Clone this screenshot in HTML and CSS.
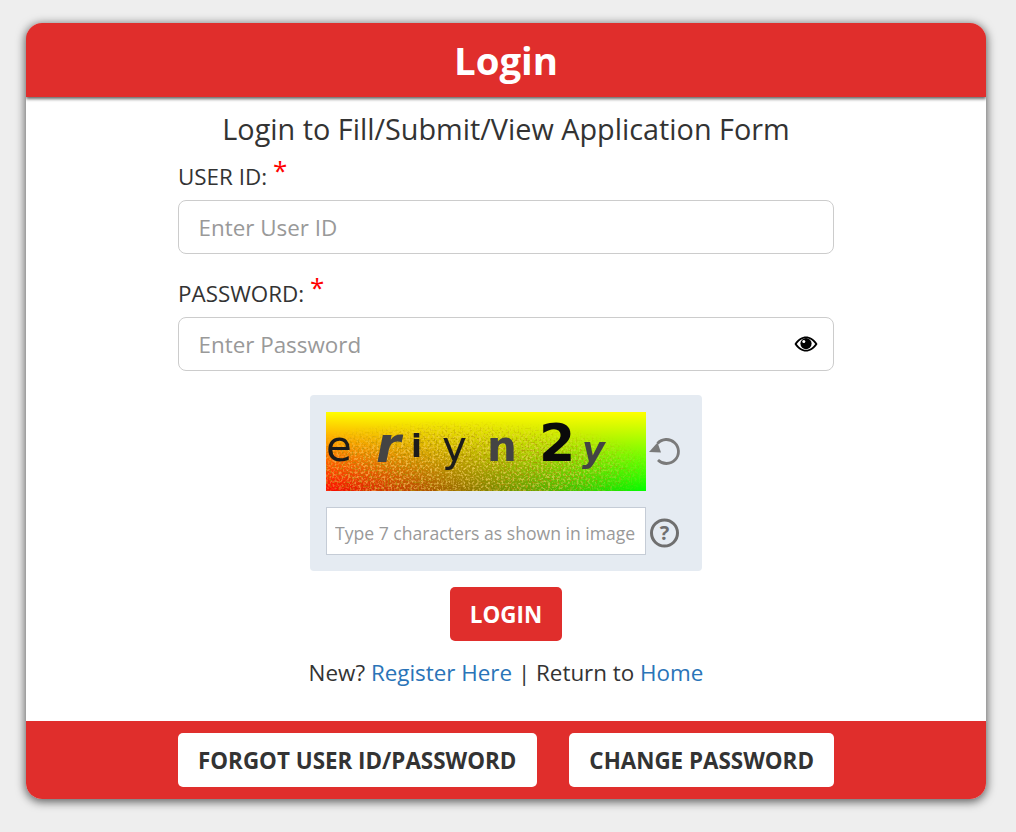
FILE: index.html
```html
<!DOCTYPE html>
<html lang="en">
<head>
<meta charset="utf-8">
<title>Login</title>
<link rel="stylesheet" href="styles.css">
</head>
<body>
<main class="card">
  <header class="card-head"><h1>Login</h1></header>
  <section class="card-body">
    <h2 class="subtitle">Login to Fill/Submit/View Application Form</h2>
    <form class="form">
      <div class="field">
        <label class="label">USER ID: <span class="req">*</span></label>
        <input class="input" type="text" placeholder="Enter User ID">
      </div>
      <div class="field">
        <label class="label">PASSWORD: <span class="req">*</span></label>
        <div class="pw-wrap">
          <input class="input" type="password" placeholder="Enter Password">
          <svg class="eye" viewBox="0 0 24 16" width="24" height="16" aria-hidden="true">
            <path fill="#000" fill-rule="evenodd" d="M.5 8C4 2.500 8 .5 12 .5S20 2.500 23.500 8C20 13.500 16 15.500 12 15.500S4 13.500 .5 8zM2.800 8C6 12.400 9 13.800 12 13.800S18 12.400 21.200 8C18 3.600 15 2.200 12 2.200S6 3.600 2.800 8z"/>
            <circle cx="12" cy="7.600" r="5.600" fill="#000"/>
            <circle cx="9.800" cy="5.600" r="1.500" fill="#fff"/>
          </svg>
        </div>
      </div>
      <div class="captcha">
        <div class="captcha-row">
          <div class="captcha-img">
            <svg class="captcha-bg" width="320" height="80" aria-hidden="true">
              <defs>
                <linearGradient id="h"><stop offset="0" stop-color="#f00"/><stop offset="1" stop-color="#0f0"/></linearGradient>
                <linearGradient id="v" x2="0" y2="1"><stop offset="0" stop-color="#ff0"/><stop offset="1" stop-color="#ff0" stop-opacity="0"/></linearGradient>
                <filter id="n" x="0" y="0" width="100%" height="100%">
                  <feTurbulence type="fractalNoise" baseFrequency=".45" numOctaves="2" seed="4"/>
                  <feColorMatrix values="0 0 0 0 1  0 0 0 0 .68  0 0 0 0 .15  0 0 0 4 -1.800"/>
                </filter>
                <filter id="d" x="0" y="0" width="100%" height="100%">
                  <feTurbulence type="fractalNoise" baseFrequency=".5" numOctaves="2" seed="11"/>
                  <feColorMatrix values="0 0 0 0 .4  0 0 0 0 .25  0 0 0 0 0  0 0 0 5 -2.500"/>
                </filter>
                <radialGradient id="m" cx=".42" cy=".72" r=".62"><stop offset="0" stop-color="#fff"/><stop offset=".6" stop-color="#bbb"/><stop offset="1" stop-color="#000"/></radialGradient>
                <mask id="mk"><rect width="320" height="80" fill="url(#m)"/></mask>
              </defs>
              <rect width="320" height="80" fill="url(#h)"/>
              <rect width="320" height="80" fill="url(#v)"/>
              <rect width="320" height="80" filter="url(#n)" mask="url(#mk)" opacity=".7"/>
              <rect width="320" height="80" filter="url(#d)" mask="url(#mk)" opacity=".8"/>
            </svg>
            <span class="ch ch1">e</span><span class="ch ch2">r</span><span class="ch ch3">i</span><span class="ch ch4">y</span><span class="ch ch5">n</span><span class="ch ch6">2</span><span class="ch ch7">y</span>
          </div>
          <svg class="cap-icon" viewBox="0 0 32 32" width="32" height="32" aria-hidden="true">
            <path fill="none" stroke="#7a7a7a" stroke-width="2.800" d="M8.500 7.500A12 12 0 1 1 9 24"/>
            <path fill="#7a7a7a" d="M0 16L8.500 6.500 12 16.500z"/>
          </svg>
        </div>
        <div class="captcha-row">
          <input class="captcha-input" type="text" placeholder="Type 7 characters as shown in image">
          <svg class="cap-icon cap-help" viewBox="0 0 32 32" width="32" height="32" aria-hidden="true">
            <circle cx="15.500" cy="16" r="13" fill="none" stroke="#6f6f6f" stroke-width="3"/>
            <text x="15.500" y="23" class="q">?</text>
          </svg>
        </div>
      </div>
      <button class="btn-login" type="button">LOGIN</button>
      <p class="links">New? <a href="#">Register Here</a> | Return to <a href="#">Home</a></p>
    </form>
  </section>
  <footer class="card-foot">
    <button class="btn-foot" type="button">FORGOT USER ID/PASSWORD</button>
    <button class="btn-foot" type="button">CHANGE PASSWORD</button>
  </footer>
</main>
</body>
</html>
```
FILE: styles.css
```css
* { box-sizing: border-box; }
html, body { margin: 0; height: 100%; }
body {
  background: #eee;
  font-family: "Open Sans", "Liberation Sans", sans-serif;
  color: #333;
  padding: 23px 30px 33px 26px;
}
.card {
  width: 960px;
  height: 776px;
  background: #fff;
  border-radius: 16px;
  box-shadow: 0 2px 10px 1px rgba(0, 0, 0, .6);
  display: flex;
  flex-direction: column;
  overflow: hidden;
}
.card-head {
  height: 74px;
  background: #e02e2c;
  box-shadow: 0 2px 3px rgba(0, 0, 0, .6);
  display: flex;
  align-items: center;
  justify-content: center;
  position: relative;
}
.card-head h1 {
  margin: 0;
  color: #fff;
  font-size: 38.4px;
  font-weight: 700;
  line-height: 1;
}
.card-body {
  flex: 1;
  display: flex;
  flex-direction: column;
  align-items: center;
}
.subtitle {
  margin: 14px 0 16px;
  font-size: 28.8px;
  font-weight: 400;
  line-height: 36px;
}
.form {
  width: 656px;
  display: flex;
  flex-direction: column;
  align-items: center;
}
.field { width: 100%; margin-bottom: 26px; }
.field + .field { margin-bottom: 24px; }
.label {
  display: block;
  font-size: 22.4px;
  line-height: 28px;
  height: 37px;
}
.req {
  color: #f00;
  font-size: 26px;
  line-height: 20px;
  position: relative;
  top: -5px;
}
.input {
  display: block;
  width: 100%;
  height: 54px;
  padding: 0 19.5px;
  border: 1px solid #ccc;
  border-radius: 8px;
  font: 400 22.4px "Open Sans", sans-serif;
  color: #333;
  background: #fff;
}
.input::placeholder, .captcha-input::placeholder { color: #999; opacity: 1; }
.pw-wrap { position: relative; }
.eye { position: absolute; right: 16px; top: 19px; }
.captcha {
  width: 392px;
  height: 176px;
  padding: 17px 16px 16px;
  background: #e5ebf2;
  border-radius: 4px;
  display: flex;
  flex-direction: column;
  gap: 16px;
}
.captcha-row { display: flex; align-items: center; gap: 3px; }
.captcha-img {
  width: 320px;
  height: 79px;
  position: relative;
  overflow: hidden;
  flex: none;
}
.captcha-bg { display: block; }
.ch { position: absolute; line-height: 1; color: #1c1c1c; filter: blur(.5px); }
.ch1 { left: 0; top: 10px; font: 400 42px "DejaVu Sans", sans-serif; }
.ch2 { left: 50px; top: 4px; font: italic 700 50px "DejaVu Sans", sans-serif; color: #444; }
.ch3 { left: 85px; top: 15px; font: 700 32px "DejaVu Sans", sans-serif; }
.ch4 { left: 116px; top: 10px; font: 400 42px "DejaVu Sans", sans-serif; }
.ch5 { left: 161px; top: 10px; font: 700 42px "DejaVu Sans", sans-serif; color: #444; }
.ch6 { left: 213px; top: 1px; font: 700 52px "DejaVu Sans", sans-serif; color: #0a0a0a; }
.ch7 { left: 256px; top: 18px; font: italic 700 35px "DejaVu Sans", sans-serif; color: #444; }
.cap-icon { flex: none; }
.cap-help { margin-top: 4px; }
.q { font: 700 20px "Open Sans", sans-serif; fill: #6f6f6f; text-anchor: middle; }
.captcha-input {
  width: 320px;
  height: 48px;
  flex: none;
  padding: 3px 8px 0;
  border: 1px solid #c5ccd6;
  background: #fff;
  font: 400 17.6px "Open Sans", sans-serif;
}
.btn-login {
  width: 112px;
  height: 54px;
  margin-top: 16px;
  border: 0;
  border-radius: 5px;
  background: #e02e2c;
  color: #fff;
  font: 700 22.4px "Open Sans", sans-serif;
}
.links {
  margin: 16px 0 0;
  font-size: 22.4px;
  line-height: 32px;
}
.links a { color: #2a74b8; text-decoration: none; }
.card-foot {
  height: 78px;
  background: #e02e2c;
  display: flex;
  justify-content: center;
  align-items: center;
  gap: 32px;
}
.btn-foot {
  height: 54px;
  padding: 0 20.5px;
  border: 0;
  border-radius: 5px;
  background: #fff;
  color: #333;
  font: 700 22.4px "Open Sans", sans-serif;
}
```
